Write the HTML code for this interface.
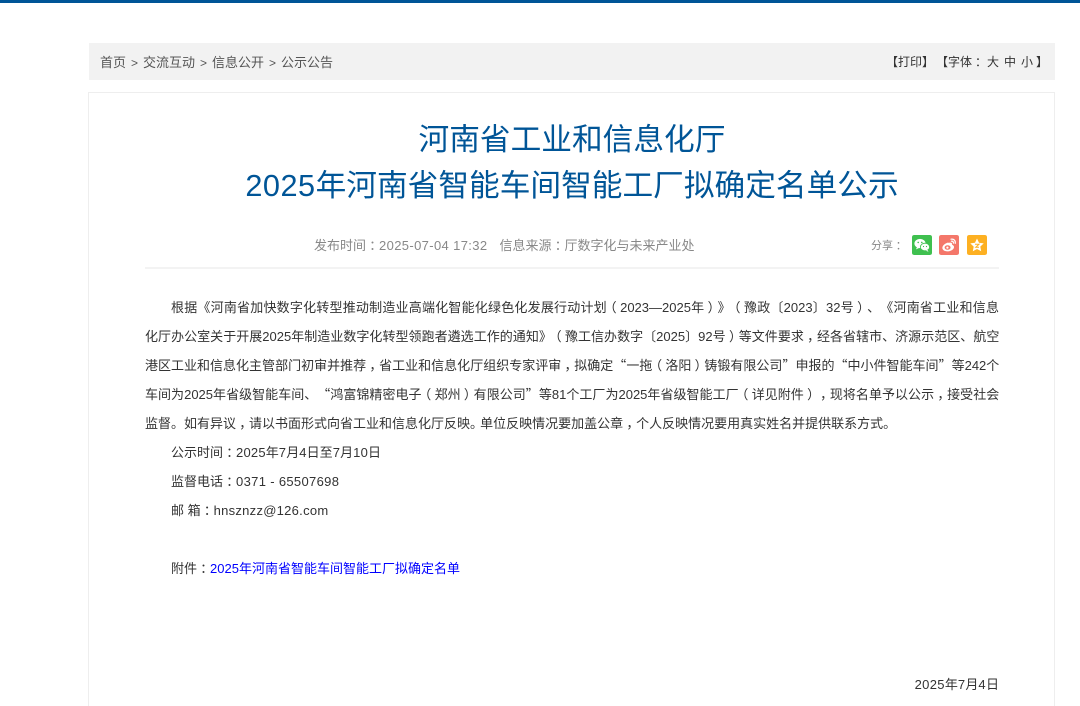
<!DOCTYPE html>
<html lang="zh-CN">
<head>
<meta charset="utf-8">
<title>2025年河南省智能车间智能工厂拟确定名单公示</title>
<style>
html,body{margin:0;padding:0;background:#fff;width:1080px;height:706px;overflow:hidden}
#w{position:absolute;left:0;top:0;width:1080px;height:706px;overflow:hidden;font-family:"Liberation Sans","Noto Sans CJK SC",sans-serif;color:#333;text-spacing-trim:space-all}
.a{position:absolute;white-space:nowrap}
#top{left:0;top:0;width:1080px;height:3px;background:#005597}
#crumb{left:89px;top:43px;width:966px;height:37px;background:#f2f2f2}
#box{left:88px;top:92px;width:965px;height:640px;border:1px solid #eeeeee}
.t{left:89px;width:966px;text-align:center;color:#005597;font-size:30.7px;line-height:46px;height:46px}
.t i{font-style:normal;letter-spacing:.5px}
.l{font-size:13px;line-height:20px;height:20px;color:#333}
.j{left:145px;width:854.4px;white-space:normal;text-align:justify;text-align-last:justify}
.ic{top:235px;width:20px;height:20px;border-radius:2px}
.d{letter-spacing:.2px}
.q{font-family:"Noto Sans CJK SC",sans-serif}
.s{position:relative;left:.25em}
.lp{position:relative;left:-.25em}
.rp{position:relative;left:.25em}
.g{display:inline-block;width:17px;text-align:center;font-size:12px}
.r{top:52px;font-size:12px;line-height:20px;color:#333}
</style>
</head>
<body>
<div id="w">
<div class="a" id="top"></div>
<div class="a" id="crumb"></div>
<div class="a" style="left:100px;top:53px;font-size:13px;line-height:20px;color:#555">首页<span class="g">&gt;</span>交流互动<span class="g">&gt;</span>信息公开<span class="g">&gt;</span>公示公告</div>
<div class="a r" style="left:886px">【打印】</div>
<div class="a r" style="left:936px">【字体<span class="s">：</span></div>
<div class="a r" style="left:987px">大</div>
<div class="a r" style="left:1004px">中</div>
<div class="a r" style="left:1021px">小</div>
<div class="a r" style="left:1036px">】</div>
<div class="a" id="box"></div>

<div class="a t" style="top:117px">河南省工业和信息化厅</div>
<div class="a t" style="top:163px"><i>2025</i>年河南省智能车间智能工厂拟确定名单公示</div>

<div class="a" style="left:314px;top:236px;font-size:13px;line-height:20px;color:#888">发布时间<span class="s">：</span><span style="letter-spacing:.36px">2025-07-04 17:32</span></div>
<div class="a" style="left:499.500px;top:236px;font-size:13px;line-height:20px;color:#888">信息来源<span class="s">：</span>厅数字化与未来产业处</div>
<div class="a" style="left:871px;top:236px;font-size:11px;line-height:20px;color:#888">分享<span class="s">：</span></div>
<svg class="a ic" style="left:912px" viewBox="0 0 20 20"><rect width="20" height="20" rx="2" fill="#3fc04f"/><ellipse cx="8" cy="8.5" rx="5.6" ry="4.6" fill="#fff"/><path d="M5 12l-1 2.4 3-1.4z" fill="#fff"/><ellipse cx="13" cy="12" rx="4.6" ry="3.8" fill="#fff" stroke="#3fc04f" stroke-width=".8"/><path d="M15.5 15l1 1.8-2.6-1z" fill="#fff"/><circle cx="6.2" cy="7.4" r=".8" fill="#3fc04f"/><circle cx="9.8" cy="7.4" r=".8" fill="#3fc04f"/><circle cx="11.5" cy="11.5" r=".6" fill="#3fc04f"/><circle cx="14.5" cy="11.5" r=".6" fill="#3fc04f"/></svg>
<svg class="a ic" style="left:939px" viewBox="0 0 20 20"><rect width="20" height="20" rx="2" fill="#f4776a"/><path d="M8.6 7.6C5.6 8.6 3 11 3.4 13.4c.5 2.4 3.6 3.4 6.6 2.8 3-.6 5.4-2.4 5-4.6-.3-1.3-1.6-1.6-2-2 .4-1.4-.6-2.2-2-2-.9.1-1.6.3-2.4 0z" fill="#fff"/><ellipse cx="8.6" cy="12.5" rx="3" ry="2.3" fill="#f4776a"/><circle cx="8.4" cy="12.6" r="1.1" fill="#fff"/><path d="M12 4.2c2.8-.6 4.8 1.6 4.2 4.2M12.4 6.2c1.3-.3 2.2.7 2 1.9" fill="none" stroke="#fff" stroke-width="1.2" stroke-linecap="round"/></svg>
<svg class="a ic" style="left:967px" viewBox="0 0 20 20"><rect width="20" height="20" rx="2" fill="#fdb022"/><path d="M10 3.5l2 4.3 4.7.6-3.4 3.2.9 4.7L10 14l-4.2 2.3.9-4.7L3.3 8.4 8 7.8z" fill="#fff"/><path d="M8 9.3h4l-3.2 3h3.200" fill="none" stroke="#fdb022" stroke-width="1"/></svg>
<div class="a" style="left:145px;top:267px;width:854px;height:2px;background:#f3f3f3"></div>

<div class="a l j" style="left:171px;width:828px;top:298px">根据《河南省加快数字化转型推动制造业高端化智能化绿色化发展行动计划<span class="lp">（</span>2023—2025年<span class="rp">）</span>》<span class="lp">（</span>豫政〔2023〕32号<span class="rp">）</span>、《河南省工业和信息</div>
<div class="a l j" style="top:327px">化厅办公室关于开展2025年制造业数字化转型领跑者遴选工作的通知》<span class="lp">（</span>豫工信办数字〔2025〕92号<span class="rp">）</span>等文件要求<span class="s">，</span>经各省辖市、济源示范区、航空</div>
<div class="a l j" style="top:355px">港区工业和信息化主管部门初审并推荐<span class="s">，</span>省工业和信息化厅组织专家评审<span class="s">，</span>拟确定<span class="q">“</span>一拖<span class="lp">（</span>洛阳<span class="rp">）</span>铸锻有限公司<span class="q">”</span>申报的<span class="q">“</span>中小件智能车间<span class="q">”</span>等242个</div>
<div class="a l j" style="top:384px">车间为2025年省级智能车间、<span class="q">“</span>鸿富锦精密电子<span class="lp">（</span>郑州<span class="rp">）</span>有限公司<span class="q">”</span>等81个工厂为2025年省级智能工厂<span class="lp">（</span>详见附件<span class="rp">）</span><span class="s">，</span>现将名单予以公示<span class="s">，</span>接受社会</div>
<div class="a l" style="left:145px;top:414px">监督。如有异议<span class="s">，</span>请以书面形式向省工业和信息化厅反映<span style="margin-right:-3px">。</span>单位反映情况要加盖公章<span class="s">，</span>个人反映情况要用真实姓名并提供联系方式。</div>
<div class="a l" style="left:171px;top:443px">公示时间<span class="s">：</span><span class="d">2025</span>年<span class="d">7</span>月<span class="d">4</span>日至<span class="d">7</span>月<span class="d">10</span>日</div>
<div class="a l" style="left:171px;top:472px">监督电话<span class="s">：</span><span style="letter-spacing:.33px">0371 - 65507698</span></div>
<div class="a l" style="left:171px;top:501px">邮 箱<span class="s">：</span><span style="letter-spacing:.27px">hnsznzz@126.com</span></div>
<div class="a l" style="left:171px;top:559px">附件<span class="s">：</span><span style="color:#0000ff">2025年河南省智能车间智能工厂拟确定名单</span></div>
<div class="a l" style="right:81px;top:675px"><span style="letter-spacing:.33px">2025</span>年<span style="letter-spacing:.33px">7</span>月<span style="letter-spacing:.33px">4</span>日</div>
</div>
</body>
</html>
